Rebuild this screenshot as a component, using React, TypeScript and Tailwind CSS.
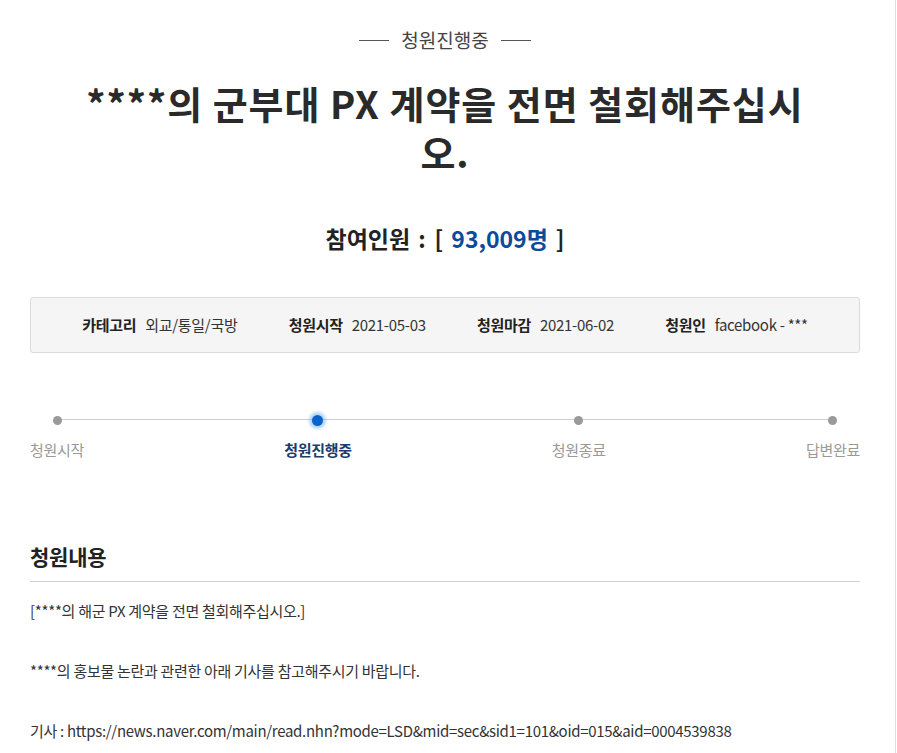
import { FC } from "react";

const font = { fontFamily: '"Noto Sans CJK KR", "Noto Sans", sans-serif' };

const InfoItem: FC<{ label: string; value: string }> = ({ label, value }) => (
  <div className="flex items-center gap-[9px] text-[15px] tracking-[-0.02em]">
    <span className="font-bold text-[#222]">{label}</span>
    <span className="text-[#333]">{value}</span>
  </div>
);

const steps = [
  { name: "청원시작", active: false },
  { name: "청원진행중", active: true },
  { name: "청원종료", active: false },
  { name: "답변완료", active: false },
];

export default function App() {
  return (
    <div
      className="w-[896px] min-h-[753px] border-r border-[#dcdcdc] bg-white pl-[30px] pr-[35px] pb-10 text-[#333]"
      style={font}
    >
      <div className="flex items-center justify-center gap-[12px] pt-[27px] text-[19px] leading-[26px] text-[#444]">
        <span className="h-px w-[30px] bg-[#555]" />
        <span>청원진행중</span>
        <span className="h-px w-[30px] bg-[#555]" />
      </div>

      <h1 className="mx-auto mt-[25px] w-[730px] break-all text-center text-[38px] font-bold leading-[49px] tracking-[0.025em] text-[#2a2a2a]">
        ****의 군부대 PX 계약을 전면 철회해주십시오.
      </h1>

      <div className="mt-[46px] flex items-center justify-center text-[23px] font-bold leading-[32px] text-[#222]">
        <span>참여인원</span>
        <span className="ml-[8px]">:</span>
        <span className="ml-[9px]">[</span>
        <span className="ml-[8px] text-[#0c4a9a]">93,009명</span>
        <span className="ml-[8px]">]</span>
      </div>

      <div className="mt-[43px] flex h-[56px] items-center justify-evenly rounded-[3px] border border-[#dadada] bg-[#f5f5f5]">
        <InfoItem label="카테고리" value="외교/통일/국방" />
        <InfoItem label="청원시작" value="2021-05-03" />
        <InfoItem label="청원마감" value="2021-06-02" />
        <InfoItem label="청원인" value="facebook - ***" />
      </div>

      <div className="relative mt-[61px] flex justify-between">
        <div className="absolute left-[26px] right-[27px] top-[5px] h-px bg-[#cfcfcf]" />
        {steps.map((s) => (
          <div key={s.name} className="relative flex flex-col items-center">
            <div className="flex h-[12px] items-center justify-center">
              {s.active ? (
                <span className="h-[11px] w-[11px] rounded-full bg-[#0a63c9] shadow-[0_0_3px_3px_rgba(90,160,240,0.45)]" />
              ) : (
                <span className="h-[9px] w-[9px] rounded-full bg-[#9a9a9a]" />
              )}
            </div>
            <span
              className={
                s.active
                  ? "mt-[13px] text-[15px] font-bold leading-[22px] tracking-[-0.02em] text-[#1d3c6c]"
                  : "mt-[13px] text-[15px] leading-[22px] tracking-[-0.02em] text-[#999]"
              }
            >
              {s.name}
            </span>
          </div>
        ))}
      </div>

      <h2 className="mt-[80px] border-b border-[#d0d0d0] pb-[10px] text-[21px] font-bold leading-[30px] tracking-[-0.01em] text-[#222]">
        청원내용
      </h2>

      <div className="pt-[14px] text-[15px] leading-[30px] tracking-[-0.02em] text-[#333]">
        <p>[****의 해군 PX 계약을 전면 철회해주십시오.]</p>
        <p>&nbsp;</p>
        <p>****의 홍보물 논란과 관련한 아래 기사를 참고해주시기 바랍니다.</p>
        <p>&nbsp;</p>
        <p>기사 : https://news.naver.com/main/read.nhn?mode=LSD&amp;mid=sec&amp;sid1=101&amp;oid=015&amp;aid=0004539838</p>
      </div>
    </div>
  );
}
